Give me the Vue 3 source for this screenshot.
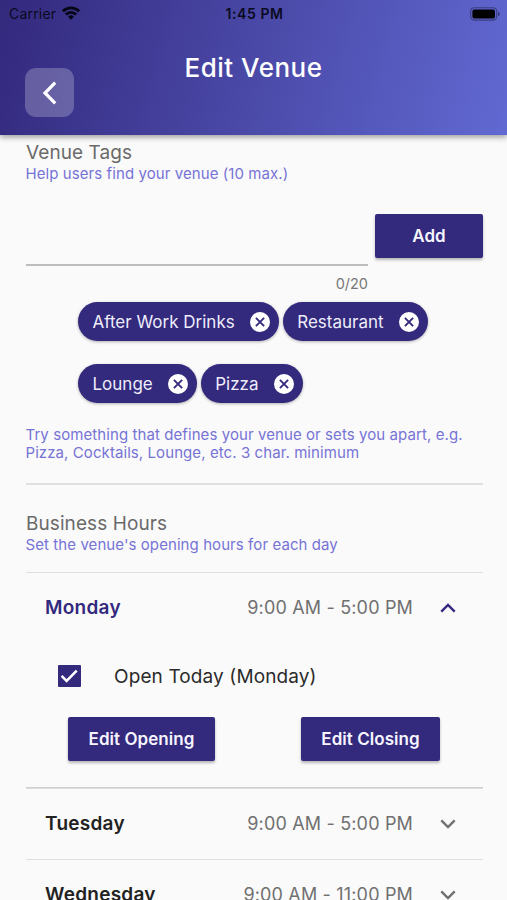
<template>
  <div class="screen">
    <header class="app-bar">
      <div class="status-bar">
        <div class="carrier">
          <span>Carrier</span>
          <svg class="wifi" viewBox="0 0 18 14" width="18" height="14">
            <g fill="none" stroke="#060614" stroke-width="2.8">
              <path d="M0.9 5.300a11.500 11.500 0 0 1 16.200 0" />
              <path d="M3.900 8.500a7.200 7.200 0 0 1 10.200 0" />
            </g>
            <path d="M9 13.700l-2.900-3a4.100 4.100 0 0 1 5.800 0z" fill="#060614" />
          </svg>
        </div>
        <span class="clock">1:45 PM</span>
        <div class="battery-wrap">
          <svg viewBox="0 0 30 14" width="30" height="14">
            <rect x="0.7" y="0.7" width="26" height="12.400" rx="3.600" fill="none" stroke="#060614" stroke-opacity="0.4" stroke-width="1.100" />
            <rect x="2.400" y="2.400" width="22.600" height="9" rx="2" fill="#000" />
            <path d="M28 4.800v4.400c1.400-.6 1.800-1.400 1.800-2.200s-.4-1.600-1.800-2.200z" fill="#060614" fill-opacity="0.45" />
          </svg>
        </div>
      </div>
      <div class="nav-row">
        <button class="back-btn" aria-label="Back">
          <svg viewBox="0 0 24 24" width="24" height="24">
            <path d="M17.200 1.700L7 12l10.200 10.300" fill="none" stroke="#fff" stroke-width="3.200" />
          </svg>
        </button>
        <h1 class="title">Edit Venue</h1>
      </div>
    </header>

    <main class="content">
      <section class="tags">
        <h2 class="section-title">Venue Tags</h2>
        <p class="hint hint-tags">Help users find your venue (10 max.)</p>

        <div class="tag-form">
          <div class="field">
            <input v-model="newTag" class="tag-input" maxlength="20" />
          </div>
          <button class="btn btn-add" @click="addTag">Add</button>
        </div>
        <div class="counter">{{ newTag.length }}/20</div>

        <div class="chips">
          <div v-for="tag in tags" :key="tag" class="chip">
            <span class="chip-label">{{ tag }}</span>
            <svg class="chip-remove" viewBox="0 0 20 20" width="20" height="20" @click="removeTag(tag)">
              <circle cx="10" cy="10" r="10" fill="#fff" />
              <path d="M5.900 5.900l8.200 8.200M14.100 5.900l-8.200 8.200" stroke="#33297d" stroke-width="1.900" />
            </svg>
          </div>
        </div>

        <p class="hint hint-help">
          Try something that defines your venue or sets you apart, e.g.<br />
          Pizza, Cocktails, Lounge, etc. 3 char. minimum
        </p>
      </section>

      <section class="hours">
        <h2 class="section-title">Business Hours</h2>
        <p class="hint hint-hours">Set the venue's opening hours for each day</p>

        <div v-for="day in days" :key="day.name" class="day" :class="{ expanded: day.name === openDay }">
          <div class="day-row" @click="toggle(day.name)">
            <span class="day-name">{{ day.name }}</span>
            <span class="day-hours">{{ day.hours }}</span>
            <svg class="chevron" viewBox="0 0 16 10" width="16" height="10">
              <path d="M1.300 1.400L8 8.100l6.700-6.700" fill="none" stroke="currentColor" stroke-width="2.400" />
            </svg>
          </div>
          <div v-if="day.name === openDay" class="day-body">
            <label class="open-today">
              <span class="checkbox">
                <svg viewBox="0 0 22 22" width="22" height="22">
                  <path d="M3.600 10.900l5 5L18.700 5.600" fill="none" stroke="#fff" stroke-width="2.500" />
                </svg>
              </span>
              <span class="open-label">Open Today ({{ day.name }})</span>
            </label>
            <div class="day-actions">
              <button class="btn btn-opening">Edit Opening</button>
              <button class="btn btn-closing">Edit Closing</button>
            </div>
          </div>
        </div>
      </section>
    </main>
  </div>
</template>

<script setup>
import { ref } from 'vue'

const newTag = ref('')
const tags = ref(['After Work Drinks', 'Restaurant', 'Lounge', 'Pizza'])
const openDay = ref('Monday')

const days = [
  { name: 'Monday', hours: '9:00 AM - 5:00 PM' },
  { name: 'Tuesday', hours: '9:00 AM - 5:00 PM' },
  { name: 'Wednesday', hours: '9:00 AM - 11:00 PM' }
]

function addTag() {
  const tag = newTag.value.trim()
  // Tags need at least 3 characters, and 10 is the limit
  if (tag.length < 3 || tags.value.length >= 10 || tags.value.includes(tag)) return
  tags.value.push(tag)
  newTag.value = ''
}

function removeTag(tag) {
  tags.value = tags.value.filter(t => t !== tag)
}

function toggle(name) {
  openDay.value = openDay.value === name ? '' : name
}
</script>

<style>
body {
  margin: 0;
  background: #fafafa;
}
</style>

<style scoped>
.screen {
  height: 900px;
  overflow: hidden;
  background: #fafafa;
  font-family: Inter, 'Liberation Sans', sans-serif;
  white-space: nowrap;
}

.screen * {
  box-sizing: border-box;
}

.app-bar {
  position: relative;
  height: 135px;
  background: linear-gradient(105deg, #33297d 0%, #6169d2 100%);
  box-shadow: 0 2px 6px rgba(0, 0, 0, 0.4);
}

.status-bar {
  display: grid;
  grid-template-columns: 1fr auto 1fr;
  align-items: center;
  height: 27px;
  padding: 0 7px 0 9px;
  color: #0b0a22;
  font-size: 14px;
  line-height: 27px;
}

.carrier {
  display: flex;
  align-items: center;
  gap: 6px;
  letter-spacing: 0.2px;
}

.wifi {
  margin-top: -2px;
}

.clock {
  font-weight: 600;
  letter-spacing: 0.6px;
}

.battery-wrap {
  display: flex;
  justify-content: flex-end;
}

.nav-row {
  display: grid;
  grid-template-columns: 1fr auto 1fr;
  padding: 22px 25px 0;
}

.back-btn {
  display: flex;
  align-items: center;
  justify-content: center;
  width: 49px;
  height: 49px;
  margin-top: 19px;
  padding: 0;
  border: none;
  border-radius: 11px;
  background: rgba(255, 255, 255, 0.23);
}

.title {
  margin: 0;
  color: #fff;
  font-size: 26px;
  font-weight: 500;
  line-height: 37px;
  letter-spacing: 0.5px;
}

.content {
  padding: 6px 24px 0 26px;
}

.section-title {
  margin: 0;
  color: #6a6a6a;
  font-size: 19px;
  font-weight: 400;
  line-height: 24px;
  letter-spacing: 0.08px;
}

.hint {
  margin: 0 0 0 -0.5px;
  color: #7673d6;
  font-size: 15px;
  line-height: 18px;
  letter-spacing: 0.08px;
}

.tag-form {
  display: flex;
  gap: 7px;
  height: 52px;
  margin-top: 31px;
}

.field {
  flex: 1;
  border-bottom: 2px solid #bdbdbd;
}

.tag-input {
  width: 100%;
  height: 100%;
  border: none;
  outline: none;
  background: transparent;
  font: inherit;
}

.btn {
  height: 44px;
  padding: 0;
  border: none;
  border-radius: 2px;
  background: #33297d;
  box-shadow: 0 2px 3px rgba(0, 0, 0, 0.28);
  color: #f6f5ff;
  font-family: inherit;
  font-size: 17px;
  font-weight: 600;
  letter-spacing: 0.05px;
}

.btn-add {
  width: 108px;
}

.counter {
  width: 342px;
  margin-top: 8px;
  color: #777;
  font-size: 14.5px;
  line-height: 20px;
  text-align: right;
}

.chips {
  display: flex;
  flex-wrap: wrap;
  gap: 23px 4px;
  margin-top: 8px;
  padding: 0 52px;
}

.chip {
  display: flex;
  align-items: center;
  gap: 15px;
  height: 39px;
  padding: 0 9px 0 14.5px;
  border-radius: 20px;
  background: #33297d;
  box-shadow: 0 1px 3px rgba(0, 0, 0, 0.3);
  color: #eeedfb;
  font-size: 17px;
}

.hint-help {
  margin-top: 23px;
}

.hours {
  margin-top: 21px;
  padding-top: 27px;
  border-top: 2px solid #e0e0e0;
}

.hint-hours {
  margin-bottom: 18px;
}

.day {
  border-top: 1px solid #dedede;
}

.day.expanded {
  border-bottom: 1px solid #cfcfcf;
}

.day-row {
  display: flex;
  align-items: center;
  height: 70px;
  padding: 0 27px 1px 19px;
}

.day-name {
  flex: 1;
  color: #222;
  font-size: 19px;
  font-weight: 600;
  letter-spacing: 0.25px;
}

.day-hours {
  color: #707070;
  font-size: 18px;
  letter-spacing: 0.17px;
}

.chevron {
  margin-left: 27px;
  color: #707070;
}

.expanded .day-name {
  color: #33297d;
}

.expanded .chevron {
  color: #33297d;
  transform: rotate(180deg);
}

.day-body {
  height: 144px;
  padding: 22px 43px 0 32px;
}

.open-today {
  display: flex;
  align-items: center;
  gap: 33px;
  height: 22px;
}

.checkbox {
  width: 23px;
  height: 22px;
  border-radius: 1px;
  background: #33297d;
}

.checkbox svg {
  display: block;
}

.open-label {
  color: #2b2b2b;
  font-size: 19px;
  letter-spacing: 0.12px;
}

.day-actions {
  display: flex;
  justify-content: space-between;
  margin: 30px 0 0 10px;
}

.btn-opening {
  width: 147px;
}

.btn-closing {
  width: 139px;
}
</style>
